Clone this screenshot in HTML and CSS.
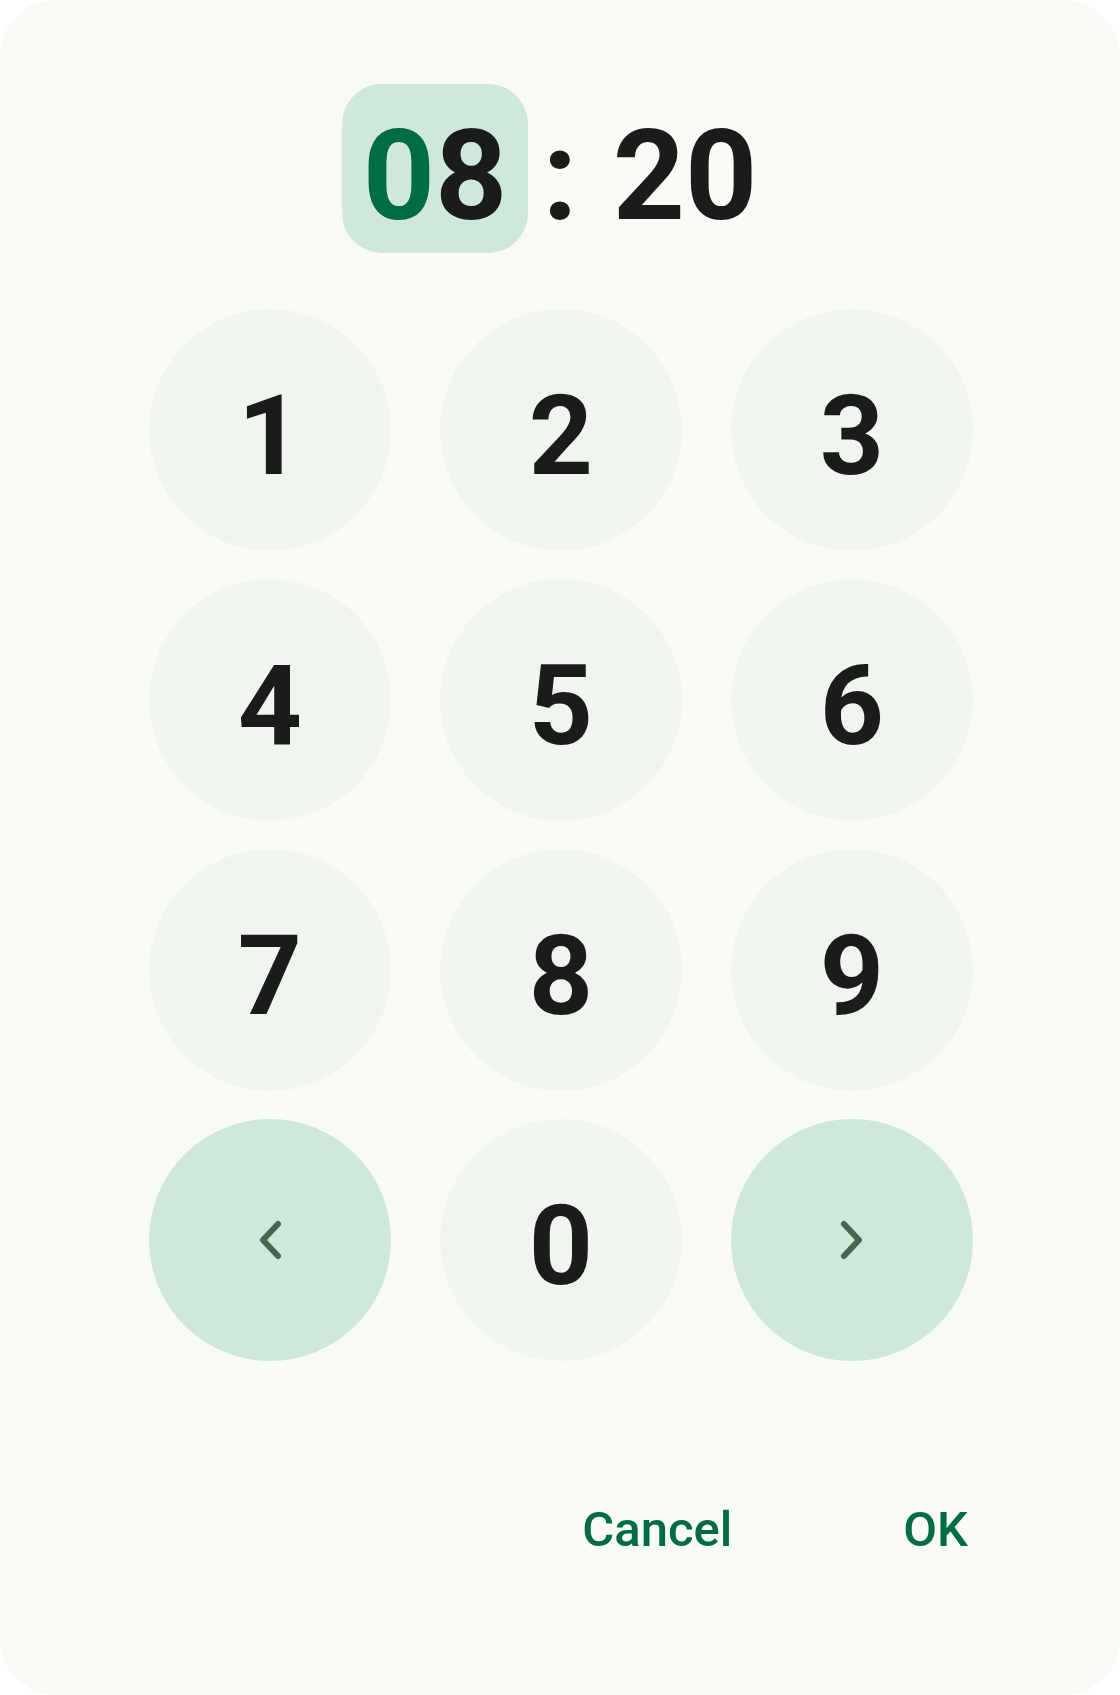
FILE: index.html
```html
<!DOCTYPE html>
<html lang="en">
<head>
<meta charset="utf-8">
<title>Time picker</title>
<link rel="stylesheet" href="styles.css">
</head>
<body>
<div class="card">
  <div class="time">
    <div class="seg seg-active"><span class="digit-active">0</span>8</div>
    <div class="colon">:</div>
    <div class="seg">20</div>
  </div>
  <div class="keypad">
    <button class="key">1</button>
    <button class="key">2</button>
    <button class="key">3</button>
    <button class="key">4</button>
    <button class="key">5</button>
    <button class="key">6</button>
    <button class="key">7</button>
    <button class="key">8</button>
    <button class="key">9</button>
    <button class="key key-nav" aria-label="Previous">
      <svg class="chev" viewBox="0 0 24 40" width="24" height="40"><path d="M20 4 L5 20 L20 36"/></svg>
    </button>
    <button class="key">0</button>
    <button class="key key-nav" aria-label="Next">
      <svg class="chev" viewBox="0 0 24 40" width="24" height="40"><path d="M4 4 L19 20 L4 36"/></svg>
    </button>
  </div>
  <div class="actions">
    <button class="text-btn">Cancel</button>
    <button class="text-btn">OK</button>
  </div>
</div>
</body>
</html>
```

FILE: styles.css
```css
html, body {
  margin: 0;
  padding: 0;
  background: #ffffff;
}

.card {
  width: 1120px;
  height: 1695px;
  box-sizing: border-box;
  background: #f8faf6;
  border-radius: 56px;
  padding-top: 84px;
  display: flex;
  flex-direction: column;
  align-items: center;
  font-family: Roboto, "Noto Sans", sans-serif;
  color: #1a1c1a;
}

.time {
  display: flex;
  align-items: stretch;
  height: 169px;
}

.seg {
  width: 186px;
  height: 169px;
  box-sizing: border-box;
  padding-top: 14px;
  display: flex;
  align-items: center;
  justify-content: center;
  font-size: 126px;
  font-weight: 700;
  border-radius: 40px;
}

.seg-active {
  background: #cfe8d9;
}

.digit-active {
  color: #006c43;
}

.colon {
  width: 64px;
  box-sizing: border-box;
  padding-top: 14px;
  display: flex;
  align-items: center;
  justify-content: center;
  font-size: 126px;
  font-weight: 700;
}

.keypad {
  margin-top: 56px;
  margin-left: 2px;
  display: grid;
  grid-template-columns: repeat(3, 242px);
  grid-auto-rows: 242px;
  column-gap: 49px;
  row-gap: 28px;
}

.key {
  border: none;
  margin: 0;
  padding: 11px 0 0 0;
  border-radius: 50%;
  background: #f1f5f0;
  color: #1a1c1a;
  font-family: Roboto, "Noto Sans", sans-serif;
  font-size: 112px;
  font-weight: 700;
  display: flex;
  align-items: center;
  justify-content: center;
  box-sizing: border-box;
}

.key-nav {
  background: #cfe8d9;
  padding: 0;
}

.chev {
  fill: none;
  stroke: #4a6352;
  stroke-width: 6;
  stroke-linecap: round;
  stroke-linejoin: round;
}

.actions {
  margin-top: 139px;
  align-self: stretch;
  display: flex;
  justify-content: flex-end;
  gap: 171px;
  padding-right: 152px;
}

.text-btn {
  border: none;
  background: none;
  padding: 0;
  margin: 0;
  font-family: Roboto, "Noto Sans", sans-serif;
  font-size: 49px;
  font-weight: 500;
  color: #006c43;
  line-height: 60px;
}
```
